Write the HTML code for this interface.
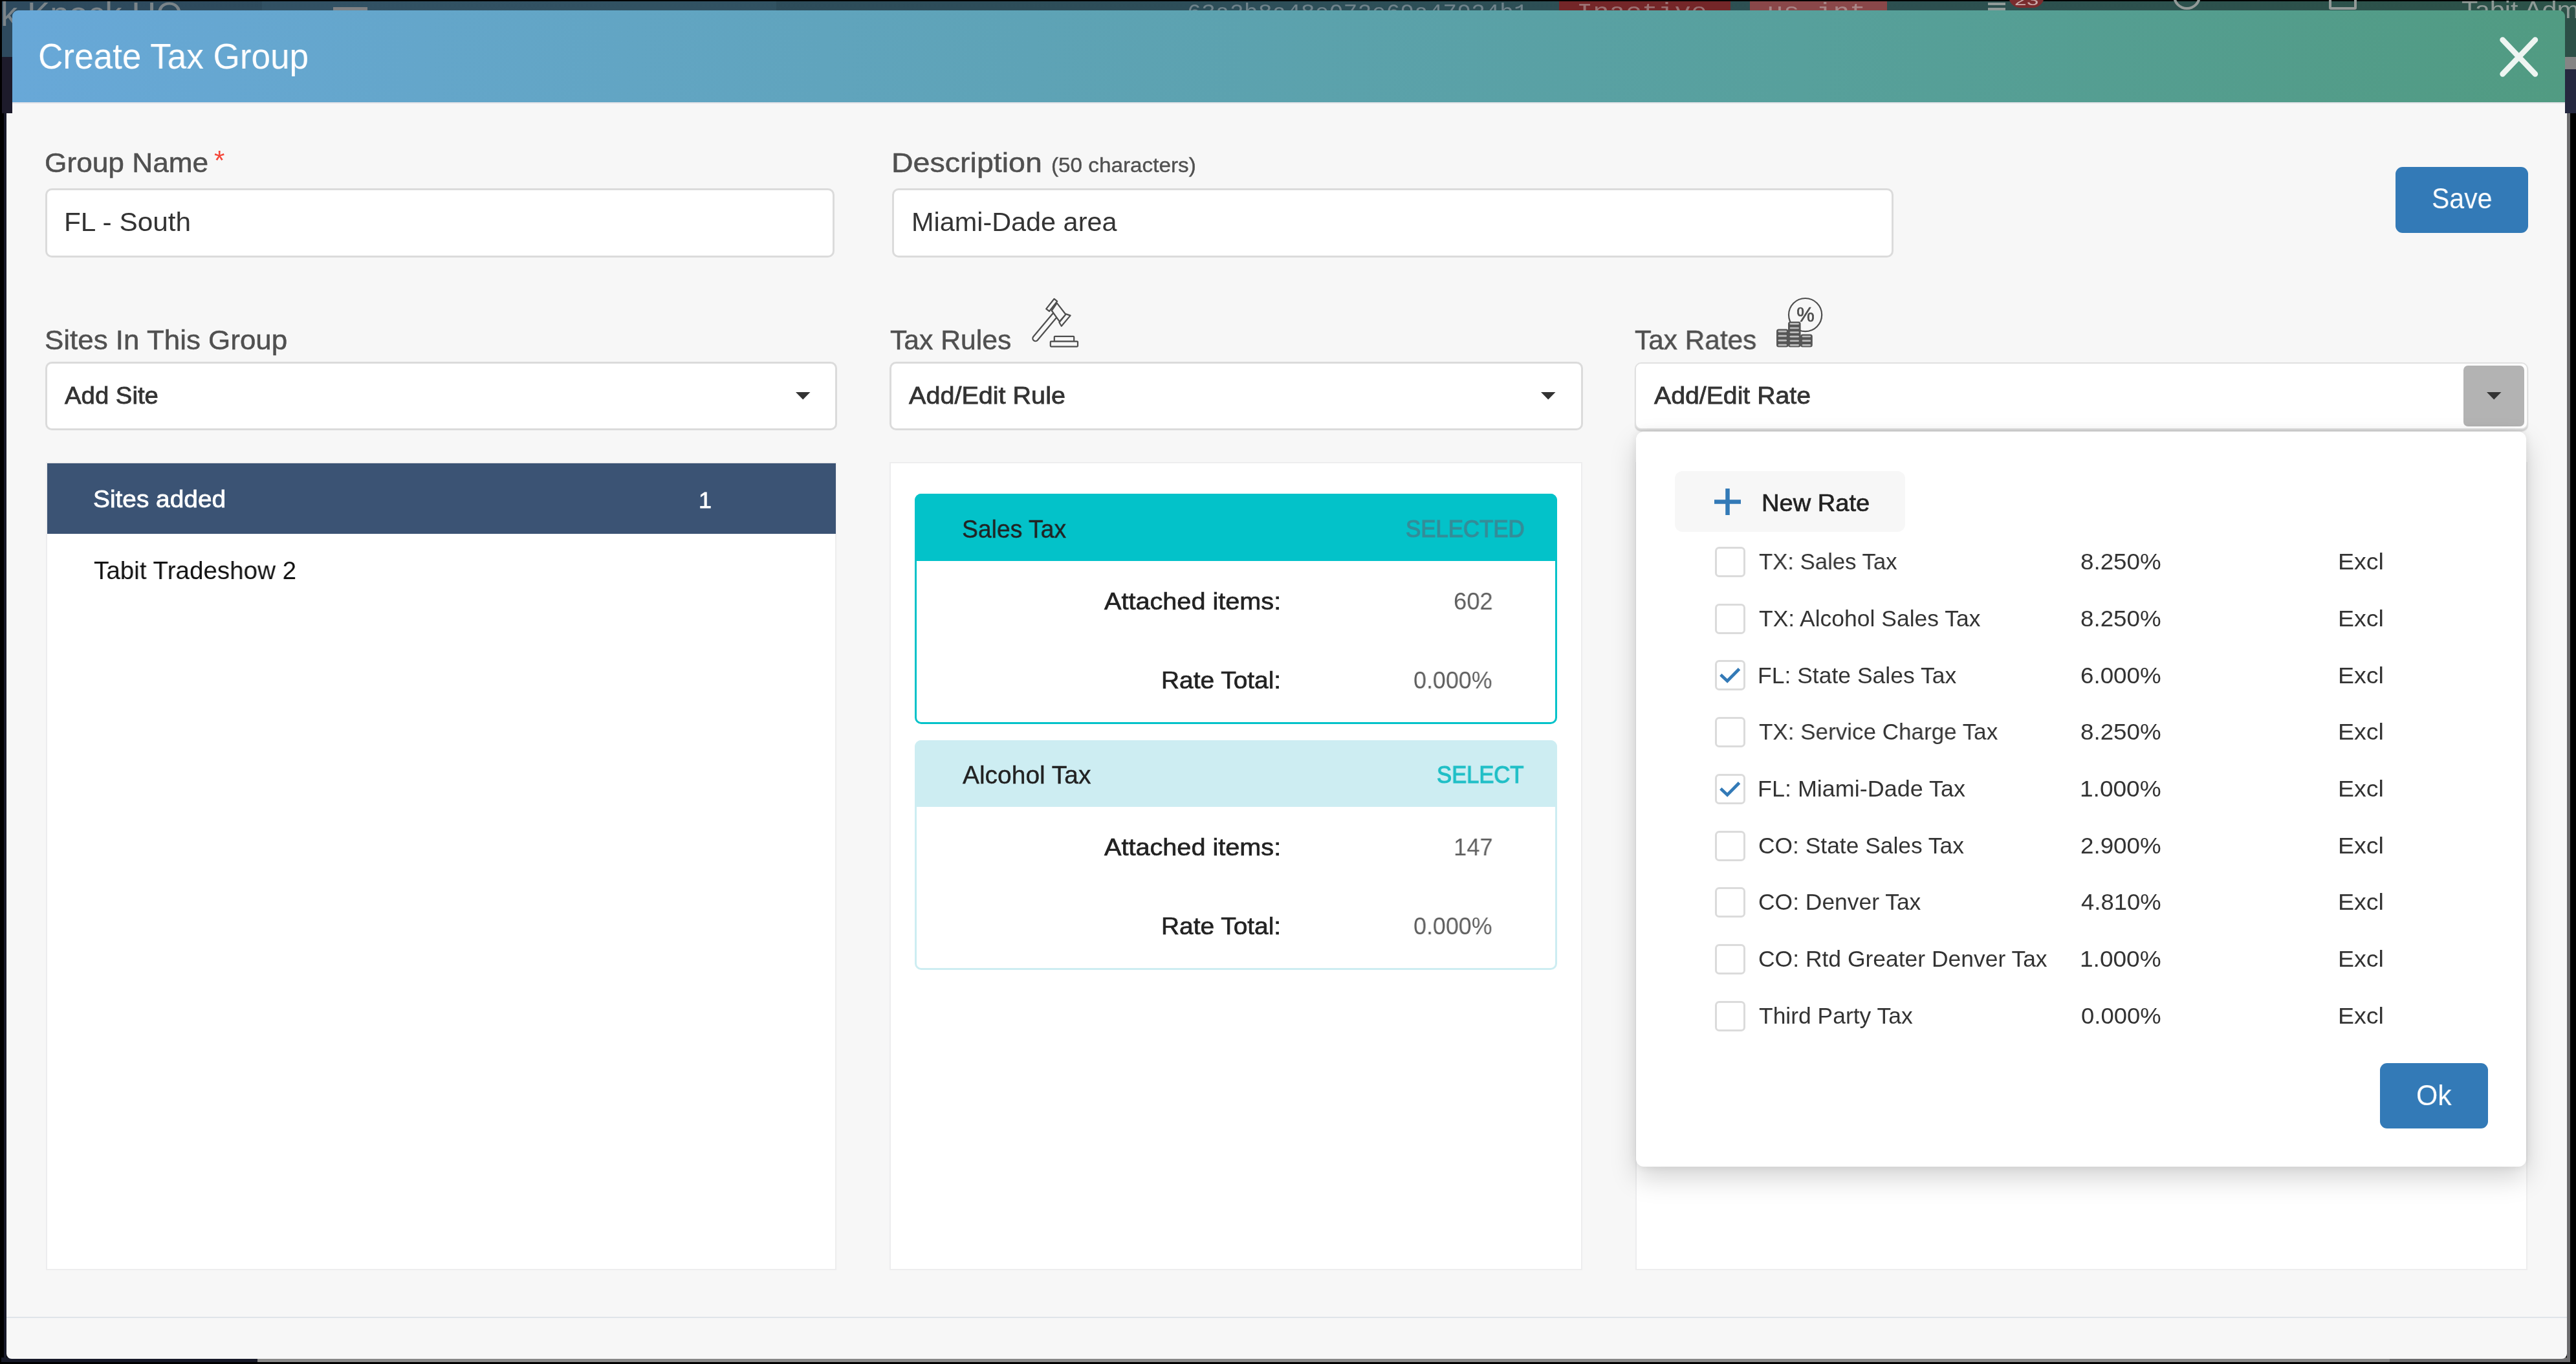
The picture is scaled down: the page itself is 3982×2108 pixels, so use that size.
<!DOCTYPE html>
<html><head><meta charset="utf-8"><title>Create Tax Group</title>
<style>
html,body{margin:0;padding:0;}
html{overflow:hidden;width:3982px;height:2108px;background:#000;}
body{width:3982px;height:2108px;overflow:hidden;background:#000;position:relative;font-family:'Liberation Sans',sans-serif;}
div{position:absolute;box-sizing:border-box;z-index:2;}
.t{white-space:pre;transform-origin:0 50%;will-change:transform;}
svg{position:absolute;overflow:visible;z-index:2;will-change:transform;}
#root{left:0;top:0;width:3982px;height:2108px;overflow:hidden;z-index:0;contain:strict;}
</style></head><body>
<div id="root">
<div style="left:3px;top:2px;width:3979px;height:38px;z-index:0;background:linear-gradient(to right,#2e4a5e 0%,#2d4e58 50%,#2c5248 100%);"></div>
<div style="left:405px;top:2px;width:795px;height:14px;z-index:0;background:rgba(80,130,160,0.12);"></div>
<div style="left:515px;top:11px;width:53px;height:5px;z-index:0;background:#7f8183;"></div>
<div style="left:2409.5px;top:2px;width:265.5px;height:14px;z-index:0;background:#742628;"></div>
<div style="left:2704.5px;top:2px;width:212.0px;height:14px;z-index:0;background:#8a4749;"></div>
<div style="left:3104.5px;top:-24px;width:55.5px;height:36px;z-index:0;background:#7a2c2e;border-radius:18px;"></div>
<div style="left:3073px;top:4px;width:27px;height:4px;z-index:0;background:#8f9a98;"></div>
<div style="left:3073px;top:12px;width:27px;height:4px;z-index:0;background:#8f9a98;"></div>
<div style="left:3359px;top:-28px;width:43px;height:42.5px;z-index:0;border:4.5px solid #939a98;border-radius:50%;"></div>
<div style="left:3600px;top:-28px;width:43px;height:42.5px;z-index:0;border:4.5px solid #939a98;border-radius:3px;"></div>
<div style="left:3968px;top:175px;width:5px;height:1929.5px;z-index:0;background:#6c6c6e;"></div>
<div style="left:6px;top:175px;width:4px;height:1929.5px;z-index:0;background:#171928;"></div>
<div style="left:2px;top:2098px;width:395.5px;height:6.5px;z-index:0;background:#171928;"></div>
<div style="left:397.5px;top:2098px;width:3296.5px;height:6.5px;z-index:0;background:#888;"></div>
<div style="left:3694px;top:2098px;width:279px;height:6.5px;z-index:0;background:#6c6c6e;"></div>
<div style="left:10px;top:156px;width:3958px;height:1944px;background:#f7f7f7;border-radius:0 0 8px 8px;"></div>
<div style="left:3px;top:16px;width:16px;height:72px;z-index:0;background:#2e4a5e;"></div>
<div style="left:3px;top:88px;width:16px;height:87px;background:#1d1b2b;"></div>
<div style="left:3965px;top:16px;width:17px;height:72px;z-index:0;background:#2c4f47;"></div>
<div style="left:3965px;top:88px;width:17px;height:19px;background:#858585;"></div>
<div style="left:3965px;top:107px;width:17px;height:68px;background:#25283f;"></div>
<div style="left:19px;top:16px;width:3946px;height:141.8px;background:linear-gradient(to right,#68a8d8 0%,#5ea3b6 40%,#57a09c 70%,#519b82 100%);border-radius:9px 9px 0 0;"></div>
<div style="left:19px;top:157.6px;width:3946px;height:2.9000000000000057px;background:#e3e3e8;"></div>
<div style="left:10px;top:2035px;width:3958px;height:2px;background:#dfe4e9;"></div>
<div style="left:70px;top:291px;width:1220px;height:107px;background:#fff;border:3px solid #dbdbdb;border-radius:10px;"></div>
<div style="left:1379px;top:291px;width:1548px;height:107px;background:#fff;border:3px solid #dbdbdb;border-radius:10px;"></div>
<div style="left:3702.8px;top:257.7px;width:205.5px;height:102.0px;background:#337ab7;border-radius:11px;"></div>
<div style="left:70px;top:559px;width:1224px;height:105.79999999999995px;background:#fff;border:3px solid #dbdbdb;border-radius:10px;"></div>
<div style="left:1374.5px;top:559px;width:1072.0px;height:105.79999999999995px;background:#fff;border:3px solid #dbdbdb;border-radius:10px;"></div>
<div style="left:2526.5px;top:559.5px;width:1381.0px;height:104.0px;background:#fff;border:2px solid #e1e1e1;border-radius:10px;box-shadow:0 2.5px 1.5px rgba(0,0,0,0.14);"></div>
<div style="left:3807.5px;top:565px;width:94.5px;height:93.5px;background:#b3b3b3;border-radius:7px;"></div>
<div style="left:71px;top:714px;width:1222px;height:1249px;background:#fff;border:2px solid #ededee;"></div>
<div style="left:1375px;top:714px;width:1070.5px;height:1249px;background:#fff;border:2px solid #ededee;"></div>
<div style="left:2527.5px;top:714px;width:1379.5px;height:1249px;background:#fff;border:2px solid #ededee;"></div>
<div style="left:72.5px;top:715.5px;width:1219.0px;height:109.5px;background:#3b5374;"></div>
<div style="left:1413.5px;top:763px;width:993.5px;height:355.5px;background:#fff;border:3px solid #03c2c9;border-radius:10px;"></div>
<div style="left:1413.5px;top:763px;width:993.5px;height:103.5px;background:#03c2c9;border-radius:10px 10px 0 0;"></div>
<div style="left:1413.5px;top:1143.5px;width:993.5px;height:355.5px;background:#fff;border:3px solid #cdedf2;border-radius:10px;"></div>
<div style="left:1413.5px;top:1143.5px;width:993.5px;height:103.0px;background:#cdedf2;border-radius:10px 10px 0 0;"></div>
<div style="left:2528.5px;top:666.8px;width:1376.6999999999998px;height:1136.4px;background:#fff;border-radius:12px;box-shadow:0 18px 40px rgba(0,0,0,0.17),0 0 14px rgba(0,0,0,0.08);"></div>
<div style="left:2589px;top:727.5px;width:355.5px;height:94.5px;background:#f7f7f7;border-radius:12px;"></div>
<div style="left:2651.2px;top:845.0px;width:47.0px;height:47.0px;background:#fff;border:3px solid #dbdbdb;border-radius:6.5px;"></div>
<div style="left:2651.2px;top:932.7px;width:47.0px;height:47.0px;background:#fff;border:3px solid #dbdbdb;border-radius:6.5px;"></div>
<div style="left:2651.2px;top:1020.4px;width:47.0px;height:47.000000000000114px;background:#fff;border:3px solid #dbdbdb;border-radius:6.5px;"></div>
<div style="left:2651.2px;top:1108.1px;width:47.0px;height:47.0px;background:#fff;border:3px solid #dbdbdb;border-radius:6.5px;"></div>
<div style="left:2651.2px;top:1195.8px;width:47.0px;height:47.0px;background:#fff;border:3px solid #dbdbdb;border-radius:6.5px;"></div>
<div style="left:2651.2px;top:1283.5px;width:47.0px;height:47.0px;background:#fff;border:3px solid #dbdbdb;border-radius:6.5px;"></div>
<div style="left:2651.2px;top:1371.2px;width:47.0px;height:47.0px;background:#fff;border:3px solid #dbdbdb;border-radius:6.5px;"></div>
<div style="left:2651.2px;top:1458.9px;width:47.0px;height:47.0px;background:#fff;border:3px solid #dbdbdb;border-radius:6.5px;"></div>
<div style="left:2651.2px;top:1546.6px;width:47.0px;height:47.0px;background:#fff;border:3px solid #dbdbdb;border-radius:6.5px;"></div>
<div style="left:3678.8px;top:1642.7px;width:166.89999999999964px;height:101.5px;background:#337ab7;border-radius:11px;"></div>
<div class="t" style="left:0.97px;top:-9.50px;height:63px;line-height:63px;font-size:52.17px;font-weight:400;color:#7b8489;z-index:1;transform:scaleX(1.0110);">k Knock HQ</div>
<div class="t" style="left:1834.84px;top:-0.50px;height:42px;line-height:42px;font-size:34.78px;font-weight:400;color:#70838b;z-index:1;font-family:'Liberation Mono',monospace;transform:scaleX(1.0524);">63a2b8a48e072e69a47924b1</div>
<div class="t" style="left:2437.37px;top:-1.50px;height:42px;line-height:42px;font-size:34.78px;font-weight:400;color:#9b7273;z-index:1;font-family:'Liberation Mono',monospace;transform:scaleX(1.2099);">Inactive</div>
<div class="t" style="left:2731.32px;top:-1.50px;height:42px;line-height:42px;font-size:34.78px;font-weight:400;color:#a98788;z-index:1;font-family:'Liberation Mono',monospace;transform:scaleX(1.2269);">us-int</div>
<div class="t" style="left:3805.36px;top:-6.00px;height:43px;line-height:43px;font-size:36.23px;font-weight:400;color:#8e9a96;z-index:1;transform:scaleX(1.1442);">Tabit Adm</div>
<div class="t" style="left:3114.45px;top:-12.50px;height:26px;line-height:26px;font-size:21.74px;font-weight:400;color:#c9a9a9;z-index:1;transform:scaleX(1.5455);">23</div>
<div class="t" style="left:59.15px;top:53.25px;height:67px;line-height:67px;font-size:55.8px;font-weight:400;color:#fff;transform:scaleX(0.9516);">Create Tax Group</div>
<div class="t" style="left:69.42px;top:226.40px;height:51px;line-height:51px;font-size:42.46px;font-weight:400;color:#505050;-webkit-text-stroke:0.5px #505050;transform:scaleX(1.0417);">Group Name</div>
<div class="t" style="left:331.00px;top:223.00px;height:50px;line-height:50px;font-size:42.03px;font-weight:400;color:#f4473a;transform:scaleX(1.0000);">*</div>
<div class="t" style="left:1377.71px;top:226.40px;height:51px;line-height:51px;font-size:42.46px;font-weight:400;color:#505050;-webkit-text-stroke:0.5px #505050;transform:scaleX(1.0966);">Description</div>
<div class="t" style="left:1624.85px;top:237.10px;height:37px;line-height:37px;font-size:31.01px;font-weight:400;color:#505050;-webkit-text-stroke:0.4px #505050;transform:scaleX(1.0732);">(50 characters)</div>
<div class="t" style="left:99.37px;top:318.50px;height:49px;line-height:49px;font-size:40.58px;font-weight:400;color:#333;transform:scaleX(1.0437);">FL - South</div>
<div class="t" style="left:1408.74px;top:318.50px;height:49px;line-height:49px;font-size:40.58px;font-weight:400;color:#333;transform:scaleX(1.0201);">Miami-Dade area</div>
<div class="t" style="left:3758.62px;top:281.00px;height:52px;line-height:52px;font-size:43.48px;font-weight:400;color:#fff;transform:scaleX(0.9421);">Save</div>
<div class="t" style="left:69.43px;top:500.40px;height:51px;line-height:51px;font-size:42.46px;font-weight:400;color:#505050;-webkit-text-stroke:0.5px #505050;transform:scaleX(1.0348);">Sites In This Group</div>
<div class="t" style="left:1375.99px;top:500.40px;height:51px;line-height:51px;font-size:42.46px;font-weight:400;color:#505050;-webkit-text-stroke:0.5px #505050;transform:scaleX(1.0054);">Tax Rules</div>
<div class="t" style="left:2527.00px;top:500.40px;height:51px;line-height:51px;font-size:42.46px;font-weight:400;color:#505050;-webkit-text-stroke:0.5px #505050;transform:scaleX(0.9973);">Tax Rates</div>
<div class="t" style="left:100.00px;top:589.40px;height:45px;line-height:45px;font-size:37.68px;font-weight:400;color:#333;-webkit-text-stroke:0.8px #333;transform:scaleX(1.0177);">Add Site</div>
<div class="t" style="left:1404.50px;top:589.40px;height:45px;line-height:45px;font-size:37.68px;font-weight:400;color:#333;-webkit-text-stroke:0.8px #333;transform:scaleX(1.0502);">Add/Edit Rule</div>
<div class="t" style="left:2556.50px;top:589.40px;height:45px;line-height:45px;font-size:37.68px;font-weight:400;color:#333;-webkit-text-stroke:0.8px #333;transform:scaleX(1.0411);">Add/Edit Rate</div>
<div class="t" style="left:144.47px;top:749.10px;height:45px;line-height:45px;font-size:37.68px;font-weight:400;color:#fff;-webkit-text-stroke:0.8px #fff;transform:scaleX(1.0306);">Sites added</div>
<div class="t" style="left:1079.50px;top:750.70px;height:43px;line-height:43px;font-size:35.94px;font-weight:400;color:#fff;-webkit-text-stroke:0.8px #fff;transform:scaleX(1.0000);">1</div>
<div class="t" style="left:144.51px;top:857.80px;height:47px;line-height:47px;font-size:38.84px;font-weight:400;color:#111;transform:scaleX(0.9936);">Tabit Tradeshow 2</div>
<div class="t" style="left:1487.05px;top:794.60px;height:46px;line-height:46px;font-size:38.26px;font-weight:400;color:#222;-webkit-text-stroke:0.4px #222;transform:scaleX(0.9755);">Sales Tax</div>
<div class="t" style="left:2173.04px;top:796.40px;height:43px;line-height:43px;font-size:36.23px;font-weight:400;color:#358c98;-webkit-text-stroke:1.2px #358c98;transform:scaleX(0.9603);">SELECTED</div>
<div class="t" style="left:1706.50px;top:906.60px;height:45px;line-height:45px;font-size:37.83px;font-weight:400;color:#222;-webkit-text-stroke:0.7px #222;transform:scaleX(1.0477);">Attached items:</div>
<div class="t" style="left:2246.52px;top:907.85px;height:44px;line-height:44px;font-size:36.67px;font-weight:400;color:#606060;transform:scaleX(0.9912);">602</div>
<div class="t" style="left:1794.92px;top:1028.60px;height:45px;line-height:45px;font-size:37.83px;font-weight:400;color:#222;-webkit-text-stroke:0.7px #222;transform:scaleX(1.0276);">Rate Total:</div>
<div class="t" style="left:2184.72px;top:1029.85px;height:44px;line-height:44px;font-size:36.67px;font-weight:400;color:#606060;transform:scaleX(0.9779);">0.000%</div>
<div class="t" style="left:1488.00px;top:1174.60px;height:46px;line-height:46px;font-size:38.26px;font-weight:400;color:#222;-webkit-text-stroke:0.4px #222;transform:scaleX(1.0179);">Alcohol Tax</div>
<div class="t" style="left:2221.05px;top:1176.40px;height:43px;line-height:43px;font-size:36.23px;font-weight:400;color:#1fbfc6;-webkit-text-stroke:1.2px #1fbfc6;transform:scaleX(0.9536);">SELECT</div>
<div class="t" style="left:1706.50px;top:1286.60px;height:45px;line-height:45px;font-size:37.83px;font-weight:400;color:#222;-webkit-text-stroke:0.7px #222;transform:scaleX(1.0477);">Attached items:</div>
<div class="t" style="left:2246.53px;top:1287.85px;height:44px;line-height:44px;font-size:36.67px;font-weight:400;color:#606060;transform:scaleX(0.9911);">147</div>
<div class="t" style="left:1794.92px;top:1408.80px;height:45px;line-height:45px;font-size:37.83px;font-weight:400;color:#222;-webkit-text-stroke:0.7px #222;transform:scaleX(1.0276);">Rate Total:</div>
<div class="t" style="left:2184.72px;top:1410.05px;height:44px;line-height:44px;font-size:36.67px;font-weight:400;color:#606060;transform:scaleX(0.9779);">0.000%</div>
<div class="t" style="left:2722.98px;top:755.10px;height:45px;line-height:45px;font-size:37.83px;font-weight:400;color:#222;-webkit-text-stroke:0.7px #222;transform:scaleX(1.0062);">New Rate</div>
<div class="t" style="left:2718.61px;top:847.25px;height:42px;line-height:42px;font-size:35.22px;font-weight:400;color:#333;transform:scaleX(0.9856);">TX: Sales Tax</div>
<div class="t" style="left:3215.91px;top:847.25px;height:42px;line-height:42px;font-size:35.22px;font-weight:400;color:#333;transform:scaleX(1.0431);">8.250%</div>
<div class="t" style="left:3613.80px;top:847.25px;height:42px;line-height:42px;font-size:35.22px;font-weight:400;color:#333;transform:scaleX(1.0656);">Excl</div>
<div class="t" style="left:2718.59px;top:934.95px;height:42px;line-height:42px;font-size:35.22px;font-weight:400;color:#333;transform:scaleX(1.0071);">TX: Alcohol Sales Tax</div>
<div class="t" style="left:3215.91px;top:934.95px;height:42px;line-height:42px;font-size:35.22px;font-weight:400;color:#333;transform:scaleX(1.0431);">8.250%</div>
<div class="t" style="left:3613.80px;top:934.95px;height:42px;line-height:42px;font-size:35.22px;font-weight:400;color:#333;transform:scaleX(1.0656);">Excl</div>
<div class="t" style="left:2716.58px;top:1022.65px;height:42px;line-height:42px;font-size:35.22px;font-weight:400;color:#333;transform:scaleX(1.0080);">FL: State Sales Tax</div>
<div class="t" style="left:3215.91px;top:1022.65px;height:42px;line-height:42px;font-size:35.22px;font-weight:400;color:#333;transform:scaleX(1.0431);">6.000%</div>
<div class="t" style="left:3613.80px;top:1022.65px;height:42px;line-height:42px;font-size:35.22px;font-weight:400;color:#333;transform:scaleX(1.0656);">Excl</div>
<div class="t" style="left:2718.61px;top:1110.35px;height:42px;line-height:42px;font-size:35.22px;font-weight:400;color:#333;transform:scaleX(0.9943);">TX: Service Charge Tax</div>
<div class="t" style="left:3215.91px;top:1110.35px;height:42px;line-height:42px;font-size:35.22px;font-weight:400;color:#333;transform:scaleX(1.0431);">8.250%</div>
<div class="t" style="left:3613.80px;top:1110.35px;height:42px;line-height:42px;font-size:35.22px;font-weight:400;color:#333;transform:scaleX(1.0656);">Excl</div>
<div class="t" style="left:2716.54px;top:1198.05px;height:42px;line-height:42px;font-size:35.22px;font-weight:400;color:#333;transform:scaleX(1.0206);">FL: Miami-Dade Tax</div>
<div class="t" style="left:3214.84px;top:1198.05px;height:42px;line-height:42px;font-size:35.22px;font-weight:400;color:#333;transform:scaleX(1.0522);">1.000%</div>
<div class="t" style="left:3613.80px;top:1198.05px;height:42px;line-height:42px;font-size:35.22px;font-weight:400;color:#333;transform:scaleX(1.0656);">Excl</div>
<div class="t" style="left:2717.59px;top:1285.75px;height:42px;line-height:42px;font-size:35.22px;font-weight:400;color:#333;transform:scaleX(1.0045);">CO: State Sales Tax</div>
<div class="t" style="left:3215.91px;top:1285.75px;height:42px;line-height:42px;font-size:35.22px;font-weight:400;color:#333;transform:scaleX(1.0431);">2.900%</div>
<div class="t" style="left:3613.80px;top:1285.75px;height:42px;line-height:42px;font-size:35.22px;font-weight:400;color:#333;transform:scaleX(1.0656);">Excl</div>
<div class="t" style="left:2717.59px;top:1373.45px;height:42px;line-height:42px;font-size:35.22px;font-weight:400;color:#333;transform:scaleX(1.0057);">CO: Denver Tax</div>
<div class="t" style="left:3216.97px;top:1373.45px;height:42px;line-height:42px;font-size:35.22px;font-weight:400;color:#333;transform:scaleX(1.0342);">4.810%</div>
<div class="t" style="left:3613.80px;top:1373.45px;height:42px;line-height:42px;font-size:35.22px;font-weight:400;color:#333;transform:scaleX(1.0656);">Excl</div>
<div class="t" style="left:2717.59px;top:1461.15px;height:42px;line-height:42px;font-size:35.22px;font-weight:400;color:#333;transform:scaleX(1.0066);">CO: Rtd Greater Denver Tax</div>
<div class="t" style="left:3214.84px;top:1461.15px;height:42px;line-height:42px;font-size:35.22px;font-weight:400;color:#333;transform:scaleX(1.0522);">1.000%</div>
<div class="t" style="left:3613.80px;top:1461.15px;height:42px;line-height:42px;font-size:35.22px;font-weight:400;color:#333;transform:scaleX(1.0656);">Excl</div>
<div class="t" style="left:2718.59px;top:1548.85px;height:42px;line-height:42px;font-size:35.22px;font-weight:400;color:#333;transform:scaleX(1.0060);">Third Party Tax</div>
<div class="t" style="left:3216.97px;top:1548.85px;height:42px;line-height:42px;font-size:35.22px;font-weight:400;color:#333;transform:scaleX(1.0342);">0.000%</div>
<div class="t" style="left:3613.80px;top:1548.85px;height:42px;line-height:42px;font-size:35.22px;font-weight:400;color:#333;transform:scaleX(1.0656);">Excl</div>
<div class="t" style="left:3734.66px;top:1666.05px;height:53px;line-height:53px;font-size:44.2px;font-weight:400;color:#fff;transform:scaleX(0.9704);">Ok</div>
<svg style="left:3864px;top:57px" width="60" height="62" viewBox="0 0 60 62"><path d="M4.5 4.5 L55 57.5 M55 4.5 L4.5 57.5" stroke="#eef5f2" stroke-width="8.5" stroke-linecap="round" fill="none"/></svg>
<svg style="left:1230px;top:606px" width="22.5" height="11.5" viewBox="0 0 22.5 11.5"><path d="M0 0 H22.5 L11.25 11.5 Z" fill="#333"/></svg>
<svg style="left:2381.5px;top:606px" width="22.5" height="11.5" viewBox="0 0 22.5 11.5"><path d="M0 0 H22.5 L11.25 11.5 Z" fill="#333"/></svg>
<svg style="left:3843.5px;top:606px" width="22.5" height="11.5" viewBox="0 0 22.5 11.5"><path d="M0 0 H22.5 L11.25 11.5 Z" fill="#333"/></svg>
<svg style="left:2650px;top:754.5px" width="41" height="41" viewBox="0 0 41 41"><path d="M20.5 0 V41 M0 20.5 H41" stroke="#337ab7" stroke-width="6.5" fill="none"/></svg>
<svg style="left:2651.2px;top:1020.4px" width="47" height="47" viewBox="0 0 47 47"><path d="M8.8 22.8 L19.1 32.4 L37.6 13.7" stroke="#337ab7" stroke-width="4.8" fill="none"/></svg>
<svg style="left:2651.2px;top:1195.8px" width="47" height="47" viewBox="0 0 47 47"><path d="M8.8 22.8 L19.1 32.4 L37.6 13.7" stroke="#337ab7" stroke-width="4.8" fill="none"/></svg>
<svg style="left:1580px;top:450px" width="110" height="100" viewBox="0 0 110 100">
<line x1="20.6" y1="73.0" x2="50" y2="38" stroke="#4e4e4e" stroke-width="10.6" stroke-linecap="round"/>
<line x1="20.6" y1="73.0" x2="50" y2="38" stroke="#f7f7f7" stroke-width="6.2" stroke-linecap="round"/>
<g fill="#f7f7f7" stroke="#4e4e4e" stroke-width="2.2" stroke-linejoin="round">
<polygon points="53.8,18.3 67.5,36.0 57.8,46.9 45.7,30.0"/>
<polygon points="37.2,27.4 49.6,11.8 54.2,15.6 42.1,31.0"/>
<polygon points="67.9,35.4 74.6,37.6 60.8,54.0 57.4,48.3"/>
</g>
<rect x="49.8" y="69.8" width="30.4" height="8" rx="1" fill="#f7f7f7" stroke="#4e4e4e" stroke-width="2.2"/>
<rect x="43.8" y="77.6" width="42.2" height="8" rx="1" fill="#f7f7f7" stroke="#4e4e4e" stroke-width="2.2"/>
</svg>
<svg style="left:2735px;top:450px" width="100" height="100" viewBox="0 0 100 100">
<circle cx="55.6" cy="36.6" r="25.6" fill="none" stroke="#4e4e4e" stroke-width="2.2"/>
<text x="56" y="47.3" text-anchor="middle" font-family="Liberation Sans,sans-serif" font-size="31" font-weight="400" stroke="#4e4e4e" stroke-width="0.7" fill="#4e4e4e">%</text>
<rect x="11" y="58.5" width="18.6" height="28.0" rx="3.5" fill="#555"/><rect x="13.6" y="60.74" width="13.400000000000002" height="2.80" rx="1.5" fill="#bdbdbd"/><rect x="13.6" y="67.74" width="13.400000000000002" height="2.80" rx="1.5" fill="#bdbdbd"/><rect x="13.6" y="74.74" width="13.400000000000002" height="2.80" rx="1.5" fill="#bdbdbd"/><rect x="13.6" y="81.74" width="13.400000000000002" height="2.80" rx="1.5" fill="#bdbdbd"/><rect x="29" y="47" width="19.6" height="39.5" rx="3.5" fill="#555"/><rect x="31.6" y="49.11" width="14.400000000000002" height="2.63" rx="1.5" fill="#bdbdbd"/><rect x="31.6" y="55.69" width="14.400000000000002" height="2.63" rx="1.5" fill="#bdbdbd"/><rect x="31.6" y="62.27" width="14.400000000000002" height="2.63" rx="1.5" fill="#bdbdbd"/><rect x="31.6" y="68.86" width="14.400000000000002" height="2.63" rx="1.5" fill="#bdbdbd"/><rect x="31.6" y="75.44" width="14.400000000000002" height="2.63" rx="1.5" fill="#bdbdbd"/><rect x="31.6" y="82.02" width="14.400000000000002" height="2.63" rx="1.5" fill="#bdbdbd"/><rect x="48" y="66.5" width="18.799999999999997" height="20.0" rx="3.5" fill="#555"/><rect x="50.6" y="68.63" width="13.599999999999998" height="2.67" rx="1.5" fill="#bdbdbd"/><rect x="50.6" y="75.30" width="13.599999999999998" height="2.67" rx="1.5" fill="#bdbdbd"/><rect x="50.6" y="81.97" width="13.599999999999998" height="2.67" rx="1.5" fill="#bdbdbd"/>
</svg>
</div>
</body></html>
